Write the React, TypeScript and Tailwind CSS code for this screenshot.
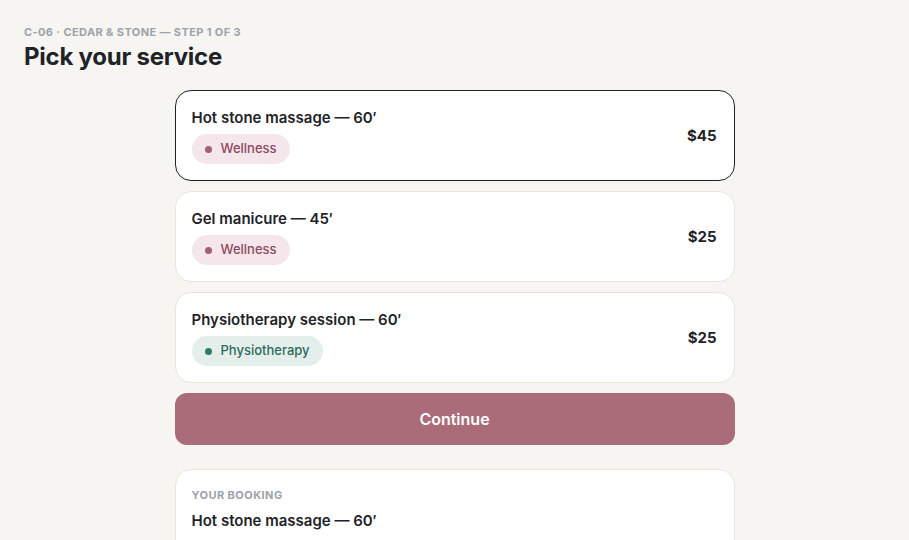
import { useState } from "react";

type Service = {
  id: string;
  name: string;
  price: string;
  tag: "Wellness" | "Physiotherapy";
};

const services: Service[] = [
  { id: "hot-stone", name: "Hot stone massage — 60′", price: "$45", tag: "Wellness" },
  { id: "gel", name: "Gel manicure — 45′", price: "$25", tag: "Wellness" },
  { id: "physio", name: "Physiotherapy session — 60′", price: "$25", tag: "Physiotherapy" },
];

function Tag({ tag }: { tag: Service["tag"] }) {
  const wellness = tag === "Wellness";
  return (
    <span
      className={`inline-flex h-[30px] items-center gap-[9px] self-start rounded-full pl-[13px] pr-[13px] text-[13px] font-medium ${
        wellness ? "bg-[#f4e6ea] text-[#8c4a5e]" : "bg-[#e4efec] text-[#2d6b5c]"
      }`}
    >
      <span className={`size-[7px] rounded-full ${wellness ? "bg-[#a35f73]" : "bg-[#2f7d69]"}`} />
      {tag}
    </span>
  );
}

export default function App() {
  const [selected, setSelected] = useState("hot-stone");
  const current = services.find((s) => s.id === selected)!;

  return (
    <main
      className="min-h-screen bg-[#f6f5f1] px-6 pt-[24px] text-[#1f2328]"
      style={{ fontFamily: "Inter, 'Noto Sans', sans-serif" }}
    >
      <p className="text-[11px] font-bold uppercase tracking-[0.035em] text-[#9ea2a9]">
        C-06 · Cedar &amp; Stone — Step 1 of 3
      </p>
      <h1 className="text-[24px] font-bold leading-[32px] tracking-[-0.01em]">Pick your service</h1>

      <div className="mx-auto mt-[17px] flex w-[560px] flex-col">
        <div className="flex flex-col gap-[10px]">
          {services.map((s) => {
            const active = s.id === selected;
            return (
              <button
                key={s.id}
                onClick={() => setSelected(s.id)}
                className={`flex h-[91px] items-center justify-between rounded-[16px] border bg-white pl-4 pr-[17px] pt-[2px] text-left ${
                  active ? "border-[#1f2328]" : "border-[#e9e5dc]"
                }`}
              >
                <div className="flex flex-col gap-[6px]">
                  <span className="text-[15px] font-semibold leading-5">{s.name}</span>
                  <Tag tag={s.tag} />
                </div>
                <span className="text-[15px] font-bold">{s.price}</span>
              </button>
            );
          })}
        </div>

        <button className="mt-[10px] h-[52px] rounded-[12px] bg-[#aa6c79] text-[16px] font-semibold text-white">
          Continue
        </button>

        <section className="mt-[24px] rounded-[16px] border border-[#e9e5dc] bg-white px-4 pb-4 pt-[17px]">
          <p className="text-[11px] font-bold uppercase tracking-[0.04em] text-[#9ea2a9]">Your booking</p>
          <p className="mt-[8px] text-[15px] font-semibold leading-5">{current.name}</p>
          <p className="mt-[6px] text-[13px] text-[#6b6f76]">Tue 14 Jul · 5:30 PM · Rita A.</p>
        </section>
      </div>
    </main>
  );
}
